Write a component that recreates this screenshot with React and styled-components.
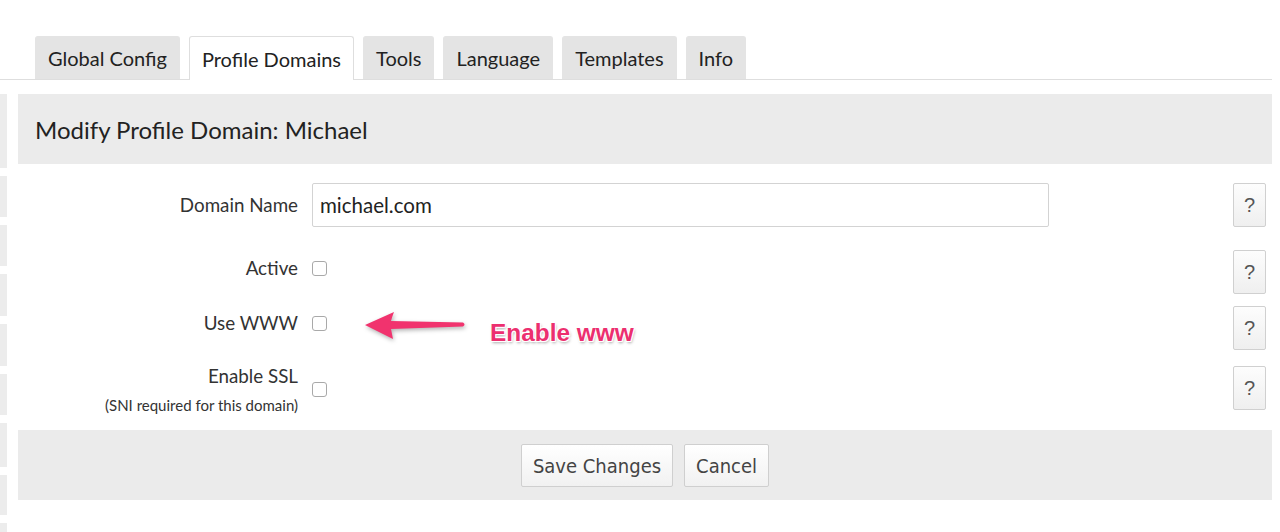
import React from 'react';
import styled, { createGlobalStyle } from 'styled-components';

const GlobalStyle = createGlobalStyle`
  html, body {
    margin: 0;
    padding: 0;
    background: #fff;
  }
  body {
    font-family: 'Lato', 'Open Sans', sans-serif;
    color: #333;
  }
`;

const TABS = ['Global Config', 'Profile Domains', 'Tools', 'Language', 'Templates', 'Info'];
const SIDE_SEGMENTS = [74, 41, 41, 42, 42, 41, 44, 40, 20];

const Page = styled.div`
  width: 1280px;
  height: 532px;
  overflow: hidden;
  position: relative;
`;

const TabBar = styled.div`
  width: 1272px;
  padding: 36px 0 0 35px;
  box-sizing: border-box;
  display: flex;
  gap: 9px;
  border-bottom: 1px solid #dedede;
  height: 80px;
`;

const Tab = styled.div`
  padding: 0 12px;
  display: flex;
  align-items: center;
  font-size: 20px;
  color: #222;
  border-radius: 3px 3px 0 0;
  box-sizing: border-box;
  background: ${p => (p.$active ? '#fff' : '#e4e4e4')};
  border: 1px solid ${p => (p.$active ? '#dedede' : '#e4e4e4')};
  border-bottom: none;
  margin-bottom: ${p => (p.$active ? '-1px' : '0')};
  height: ${p => (p.$active ? '44px' : '43px')};
`;

const Body = styled.div`
  display: flex;
  gap: 11px;
  padding-top: 14px;
`;

const Side = styled.div`
  width: 7px;
  display: flex;
  flex-direction: column;
  gap: 8px;
`;

const SideSegment = styled.div`
  background: #ececec;
  width: 7px;
`;

const Main = styled.div`
  width: 1254px;
  position: relative;
`;

const PanelHeader = styled.div`
  background: #ebebeb;
  height: 70px;
  display: flex;
  align-items: center;
  padding-left: 17px;
  font-size: 24px;
  color: #222;
`;

const Form = styled.div`
  padding: 19px 6px 23px 0;
  display: flex;
  flex-direction: column;
`;

const Row = styled.div`
  display: grid;
  grid-template-columns: 280px 737px 1fr 33px;
  column-gap: 14px;
  align-items: center;
  margin-top: ${p => p.$top || 0}px;
  height: 44px;
`;

const Label = styled.div`
  text-align: right;
  font-size: 18.8px;
  color: #333;
  line-height: 1.2;
  margin-top: ${p => p.$shift || 0}px;
`;

const SubLabel = styled.div`
  font-size: 15px;
  color: #333;
  margin-top: 8px;
`;

const TextInput = styled.input`
  height: 44px;
  box-sizing: border-box;
  border: 1px solid #d3d3d3;
  border-radius: 2px;
  padding: 0 7px;
  font-family: 'Lato', 'Open Sans', sans-serif;
  font-size: 20.5px;
  color: #222;
  outline: none;
`;

const Check = styled.span`
  width: 15px;
  height: 15px;
  box-sizing: border-box;
  border: 1px solid #a9a9a9;
  border-radius: 3px;
  background: #fff;
  display: block;
  margin-top: ${p => p.$shift || 0}px;
`;

const HelpButton = styled.button`
  grid-column: 4;
  width: 33px;
  height: 44px;
  padding: 0;
  border: 1px solid #d0d0d0;
  border-radius: 2px;
  background: linear-gradient(#fdfdfd, #efefef);
  color: #555;
  font-family: 'Liberation Sans', 'DejaVu Sans', sans-serif;
  font-size: 20px;
`;

const Footer = styled.div`
  background: #ebebeb;
  height: 70px;
  display: flex;
  justify-content: center;
  align-items: flex-start;
  padding-top: 14px;
  box-sizing: border-box;
  gap: 11px;
`;

const FooterButton = styled.button`
  height: 43px;
  padding: 0 11px;
  border: 1px solid #cfcfcf;
  border-radius: 2px;
  background: linear-gradient(#ffffff, #f1f1f1);
  color: #444;
  font-family: 'Liberation Sans Narrow', 'DejaVu Sans Condensed', 'Liberation Sans', sans-serif;
  font-stretch: condensed;
  font-size: 20px;
`;

const Annotation = styled.div`
  position: absolute;
  left: 344px;
  top: 210px;
  display: flex;
  align-items: center;
  gap: 22px;
`;

const AnnotationText = styled.span`
  font-family: 'Liberation Sans', Arial, sans-serif;
  font-weight: bold;
  font-size: 24.4px;
  color: #ec2f6f;
  margin-top: 15px;
  text-shadow: 1px 1px 0 #fff, -1px -1px 0 #fff, 1px -1px 0 #fff, -1px 1px 0 #fff,
    1px 2px 3px rgba(0, 0, 0, 0.35);
`;

function Arrow() {
  return (
    <svg width="106" height="34" viewBox="0 0 106 34" style={{ filter: 'drop-shadow(1px 2px 2px rgba(0,0,0,0.3))' }}>
      <path
        d="M3 16 L32 3 Q30 8 29 12 L101 13.5 Q104 15.5 101 17.5 L29 20 Q30 25 31 30 Z"
        fill="#f1336e"
      />
    </svg>
  );
}

export default function App() {
  return (
    <Page>
      <GlobalStyle />
      <TabBar>
        {TABS.map(t => (
          <Tab key={t} $active={t === 'Profile Domains'}>
            {t}
          </Tab>
        ))}
      </TabBar>
      <Body>
        <Side>
          {SIDE_SEGMENTS.map((h, i) => (
            <SideSegment key={i} style={{ height: h }} />
          ))}
        </Side>
        <Main>
          <PanelHeader>Modify Profile Domain: Michael</PanelHeader>
          <Form>
            <Row>
              <Label>Domain Name</Label>
              <TextInput defaultValue="michael.com" />
              <HelpButton>?</HelpButton>
            </Row>
            <Row $top={23}>
              <Label $shift={-8}>Active</Label>
              <Check $shift={-8} />
              <HelpButton>?</HelpButton>
            </Row>
            <Row $top={12}>
              <Label $shift={-9}>Use WWW</Label>
              <Check $shift={-9} />
              <HelpButton>?</HelpButton>
            </Row>
            <Row $top={13}>
              <Label $shift={2}>
                Enable SSL
                <SubLabel>(SNI required for this domain)</SubLabel>
              </Label>
              <Check $shift={2} />
              <HelpButton>?</HelpButton>
            </Row>
          </Form>
          <Footer>
            <FooterButton>Save Changes</FooterButton>
            <FooterButton>Cancel</FooterButton>
          </Footer>
          <Annotation>
            <Arrow />
            <AnnotationText>Enable www</AnnotationText>
          </Annotation>
        </Main>
      </Body>
    </Page>
  );
}
